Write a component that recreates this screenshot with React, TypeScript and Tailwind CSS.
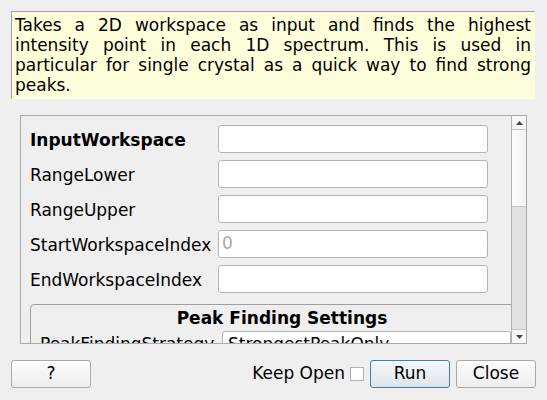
import React from "react";

const font = { fontFamily: '"DejaVu Sans", sans-serif' };

function Field({ label, bold, value }: { label: string; bold?: boolean; value?: string }) {
  return (
    <div className="flex items-center h-[28px]">
      <div className={`w-[188px] shrink-0 text-[17px] leading-[20px] pt-[1px] text-black whitespace-nowrap ${bold ? "font-bold" : ""}`}>{label}</div>
      <div className="w-[270px] shrink-0 h-[28px] bg-white border border-[#b4b4b4] rounded-[3px] flex items-center pl-[3px] text-[17px] text-[#a8a8a8]">
        {value}
      </div>
    </div>
  );
}

export default function App() {
  return (
    <div className="w-[547px] h-[400px] bg-[#efefef] relative overflow-hidden flex flex-col" style={font}>
      <div className="mt-[11px] ml-[11px] w-[524px] h-[88px] border-t border-l border-[#a0a0a0] bg-[#ffffdc] pl-[3px] pr-[4px] pt-[3px] text-[17px] leading-[20px] text-black text-justify">
        Takes a 2D workspace as input and finds the highest intensity point in each 1D spectrum. This is used in particular for single crystal as a quick way to find strong peaks.
      </div>
      <div className="mt-[16px] ml-[20px] w-[507px] h-[229px] border border-[#a9a9a9] flex overflow-hidden">
        <div className="flex-1 overflow-hidden pt-[9px] pl-[9px]">
          <div className="flex flex-col gap-[7px]">
            <Field label="InputWorkspace" bold />
            <Field label="RangeLower" />
            <Field label="RangeUpper" />
            <Field label="StartWorkspaceIndex" value="0" />
            <Field label="EndWorkspaceIndex" />
          </div>
          <div className="mt-[11px] w-[506px] h-[80px] border border-[#a0a0a0] rounded-[4px]">
            <div className="text-center font-bold text-[17px] leading-[20px] pt-[3px] pr-[2px]">Peak Finding Settings</div>
            <div className="flex items-center mt-[3px] pl-[9px]">
              <div className="w-[182px] shrink-0 text-[17px] whitespace-nowrap">PeakFindingStrategy</div>
              <div className="w-[289px] shrink-0 h-[28px] bg-white border border-[#b4b4b4] rounded-[3px] flex items-center pl-[5px] text-[17px] relative">
                StrongestPeakOnly
                <div className="absolute right-[9px] top-[11px] w-[6px] h-[2px] bg-[#555]" />
              </div>
            </div>
          </div>
        </div>
        <div className="w-[15px] border-l border-[#b0b0b0] flex flex-col bg-[#e2e2e2]">
          <div className="h-[14px] bg-[#f6f6f6] border-b border-[#c4c4c4] flex items-center justify-center">
            <svg width="7" height="4" viewBox="0 0 7 4"><polygon points="0,4 7,4 3.5,0" fill="#444" /></svg>
          </div>
          <div className="h-[77px] bg-gradient-to-r from-[#fdfdfd] to-[#f2f2f2] border-b border-[#c4c4c4]" />
          <div className="flex-1" />
          <div className="h-[14px] bg-[#f6f6f6] border-t border-[#c4c4c4] flex items-center justify-center">
            <svg width="7" height="4" viewBox="0 0 7 4"><polygon points="0,0 7,0 3.5,4" fill="#444" /></svg>
          </div>
        </div>
      </div>
      <div className="flex items-center mt-[16px] ml-[11px] h-[28px]">
        <button className="w-[80px] h-[28px] border border-[#a9a9a9] rounded-[3px] bg-gradient-to-b from-[#fcfcfc] to-[#eeeeee] text-[17px] text-black">?</button>
        <div className="flex-1" />
        <span className="text-[17px] text-black mr-[5px]">Keep Open</span>
        <div className="w-[14px] h-[14px] bg-white border border-[#b0b0b0] mr-[6px]" />
        <button className="w-[80px] h-[28px] border border-[#3f80b4] rounded-[3px] bg-gradient-to-b from-[#f5f8fb] to-[#dde5ec] text-[17px] text-black">Run</button>
        <button className="ml-[6px] mr-[11px] w-[80px] h-[28px] border border-[#a9a9a9] rounded-[3px] bg-gradient-to-b from-[#fcfcfc] to-[#eeeeee] text-[17px] text-black">Close</button>
      </div>
    </div>
  );
}
